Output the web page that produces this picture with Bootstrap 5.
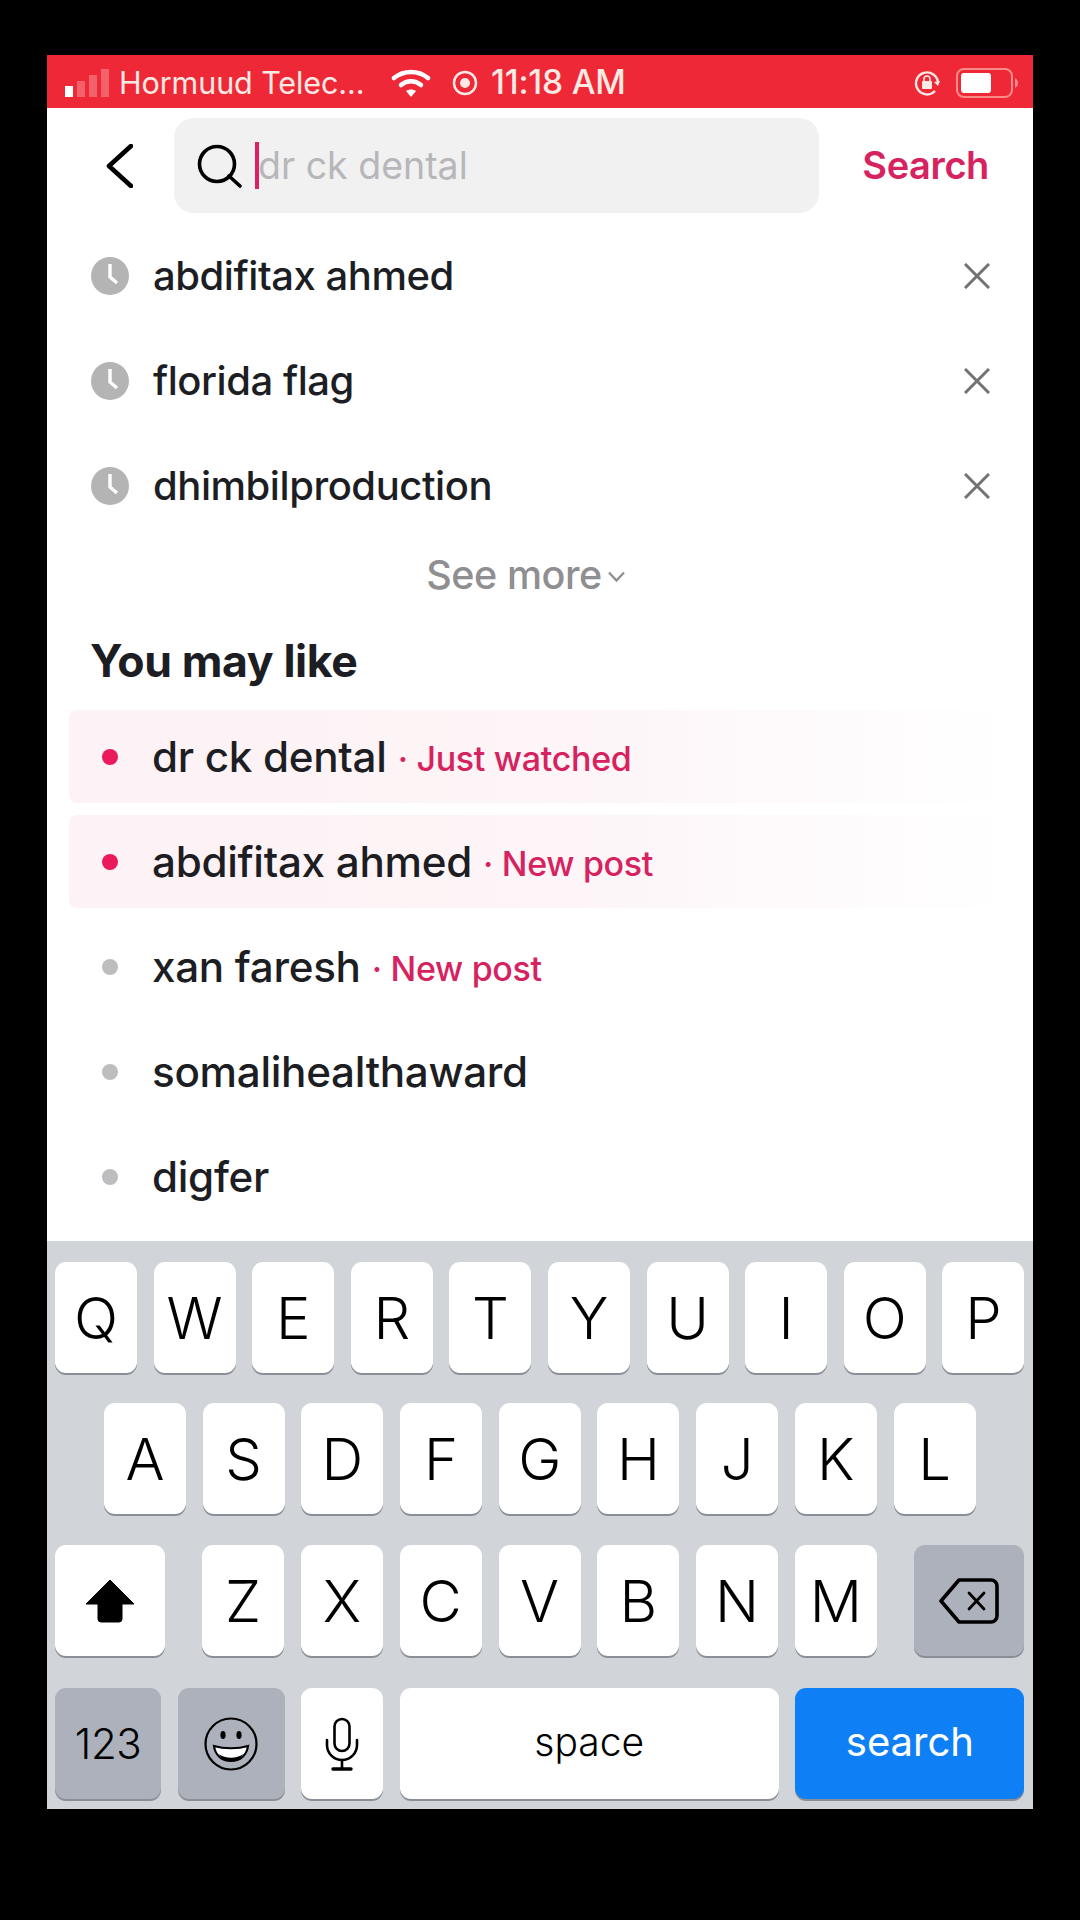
<!DOCTYPE html>
<html lang="en">
<head>
  <meta charset="UTF-8" />
  <meta name="viewport" content="width=device-width, initial-scale=1" />
  <title>Search</title>
  <link href="https://cdn.jsdelivr.net/npm/bootstrap@5.3.3/dist/css/bootstrap.min.css" rel="stylesheet">
  <style>
    html, body { background: #000; }
    body { margin: 0; height: 1920px; padding: 55px 47px 111px 47px; font-family: Inter, "Liberation Sans", sans-serif; color: #1d1e23; overflow: hidden; }
    .phone-screen { width: 986px; height: 1754px; background: #fff; }

    .status-strip { height: 53px; background: #ee2836; color: #fbe9e4; font-size: 30.5px; padding: 2px 15px 0 18px; }
    .signal-bars { width: 44px; height: 28px; gap: 4px; }
    .signal-bars i { width: 8px; background: #f3616a; display: block; }
    .signal-bars i:first-child { background: #fff; }
    .carrier-text { margin-left: 10px; width: 272px; letter-spacing: -.1px; }
    .alarm-mark { margin-left: 21px; }
    .clock-text { font-size: 33.5px; font-weight: 500; margin-left: 13px; letter-spacing: -.2px; }

    .search-head { height: 115.5px; padding: 10px 44px 10.5px 0; }
    .back-slot { width: 127px; padding-left: 59px; }
    .search-field { width: 645px; height: 95px; background: #f1f1f2; border-radius: 20px; padding-left: 22px; font-size: 37.5px; color: #b7b7ba; }
    .hint-text { padding-top: 2px; }
    .caret-bar { width: 4px; height: 47px; background: #de1f63; margin-left: 13px; margin-right: -1px; }
    .search-go { color: #d6225f; font-size: 38px; font-weight: 600; margin-left: auto; letter-spacing: -.4px; }

    .history-row { height: 105px; padding: 0 43px 0 44px; font-size: 40px; font-weight: 500; letter-spacing: -.45px; }
    .history-row svg:first-child { margin-right: 24px; }
    .see-more { height: 73px; color: #8f8f91; font-size: 39.5px; font-weight: 500; letter-spacing: -.45px; gap: 6px; padding-right: 29px; padding-top: 2px; }
    .may-like { height: 98.5px; padding-left: 43px; font-size: 44.6px; font-weight: 700; letter-spacing: -.4px; margin: 0; padding-top: 1px; color: #1d1e23; }

    .suggest-row { height: 93px; margin: 0 23px 12px 22px; padding-left: 33px; font-size: 42.2px; font-weight: 500; letter-spacing: -.3px; border-radius: 8px; }
    .suggest-hot { background: linear-gradient(90deg, #fdf2f5 0%, #fdf5f7 55%, #fff 100%); }
    .suggest-dot { width: 16px; height: 16px; border-radius: 50%; background: #bdbdbf; margin-right: 34px; flex: none; }
    .suggest-hot .suggest-dot { background: #ea1a5d; }
    .suggest-note { color: #d6225f; font-size: 34px; font-weight: 500; letter-spacing: -.3px; margin-left: 11px; margin-top: 4px; }

    .kb-panel { height: 568px; background: #d1d4d9; padding: 21px 9px 0 8px; margin-top: auto; }
    .kb-line { gap: 16.6px; height: 111px; margin-bottom: 30px; }
    .kb-line-second { padding-left: 49px; gap: 16.7px; margin-bottom: 31px; }
    .kb-line-third { margin-bottom: 32px; }
    .kb-key { flex: 0 0 82px; height: 111px; padding: 0; border: 0; border-radius: 11px; background-color: #fff; box-shadow: 0 2px 0 #8a8e96; color: #000; font-size: 58px; line-height: 1; font-weight: 350; font-family: Inter, "Liberation Sans", sans-serif; display: flex; align-items: center; justify-content: center; }
    .kb-dark { background-color: #acb1bb; }
    .kb-shift { flex-basis: 110px; }
    .kb-del { flex-basis: 110px; }
    .kb-num { flex-basis: 106px; font-size: 42px; letter-spacing: -.5px; font-weight: 300; }
    .kb-emoji { flex-basis: 107px; }
    .kb-space { flex-basis: 379px; font-size: 39px; padding-bottom: 4px; }
    .kb-search { flex-basis: 229px; background-color: #0f7ff5; color: #fff; font-size: 40px; font-weight: 400; padding-bottom: 4px; }
    .kb-letters { gap: 16.8px; }
  </style>
</head>
<body>
  <div class="phone-screen d-flex flex-column">
    <div class="status-strip d-flex align-items-center">
      <div class="signal-bars d-flex align-items-end">
        <i style="height:11px"></i><i style="height:16px"></i><i style="height:22px"></i><i style="height:28px"></i>
      </div>
      <span class="carrier-text">Hormuud Telec...</span>
      <svg width="40" height="30" viewBox="0 0 40 30" fill="none" stroke="#fff" stroke-width="4.5" stroke-linecap="round">
        <path d="M3 10c10-8 24-8 34 0"/><path d="M10 17c6-5 14-5 20 0"/><path d="M20 29l-5-6c3-2 7-2 10 0z" fill="#fff" stroke="none"/>
      </svg>
      <svg class="alarm-mark" width="26" height="26" viewBox="0 0 26 26">
        <circle cx="13" cy="13" r="11" fill="none" stroke="#fbe9e4" stroke-width="2.5"/><circle cx="13" cy="13" r="5" fill="#fbe9e4"/>
      </svg>
      <span class="clock-text">11:18 AM</span>
      <svg class="ms-auto" width="26" height="26" viewBox="0 0 26 26" fill="none">
        <path d="M21 21a11 11 0 1 1 3-8" stroke="#fbe9e4" stroke-width="2.4"/><path d="M20 12l4 4 2-5z" fill="#fbe9e4"/><rect x="8" y="11" width="10" height="8" rx="1" fill="#fbe9e4"/><path d="M10 11V9a3 3 0 0 1 6 0v2" stroke="#fbe9e4" stroke-width="1.6"/>
      </svg>
      <svg class="ms-3" width="62" height="30" viewBox="0 0 62 30">
        <rect x="1" y="1" width="55" height="28" rx="7" fill="none" stroke="#f88a8a" stroke-width="2"/><rect x="5" y="5" width="30" height="20" rx="3" fill="#fff"/><path d="M59 10c2 1 3 3 3 5s-1 4-3 5z" fill="#f88a8a"/>
      </svg>
    </div>

    <div class="search-head d-flex align-items-center">
      <div class="back-slot">
        <svg width="27" height="44" viewBox="0 0 27 44" fill="none" stroke="#000" stroke-width="4.6" stroke-linecap="round" stroke-linejoin="round"><path d="M25 2L3 22l22 20"/></svg>
      </div>
      <div class="search-field d-flex align-items-center">
        <svg width="46" height="44" viewBox="0 0 46 44" fill="none" stroke="#000" stroke-width="3.6" stroke-linecap="round"><circle cx="21" cy="20" r="17.5"/><path d="M33 32l11 10"/></svg>
        <span class="caret-bar"></span>
        <span class="hint-text">dr ck dental</span>
      </div>
      <span class="search-go">Search</span>
    </div>

    <div class="history-row d-flex align-items-center">
      <svg width="38" height="38" viewBox="0 0 38 38"><circle cx="19" cy="19" r="19" fill="#b4b4b5"/><path d="M19 7v13l7 6" fill="none" stroke="#fff" stroke-width="3.4"/></svg>
      <span>abdifitax ahmed</span>
      <svg class="ms-auto" width="26" height="26" viewBox="0 0 26 26" fill="none" stroke="#737375" stroke-width="3"><path d="M1 1l24 24M25 1L1 25"/></svg>
    </div>
    <div class="history-row d-flex align-items-center">
      <svg width="38" height="38" viewBox="0 0 38 38"><circle cx="19" cy="19" r="19" fill="#b4b4b5"/><path d="M19 7v13l7 6" fill="none" stroke="#fff" stroke-width="3.4"/></svg>
      <span>florida flag</span>
      <svg class="ms-auto" width="26" height="26" viewBox="0 0 26 26" fill="none" stroke="#737375" stroke-width="3"><path d="M1 1l24 24M25 1L1 25"/></svg>
    </div>
    <div class="history-row d-flex align-items-center">
      <svg width="38" height="38" viewBox="0 0 38 38"><circle cx="19" cy="19" r="19" fill="#b4b4b5"/><path d="M19 7v13l7 6" fill="none" stroke="#fff" stroke-width="3.4"/></svg>
      <span>dhimbilproduction</span>
      <svg class="ms-auto" width="26" height="26" viewBox="0 0 26 26" fill="none" stroke="#737375" stroke-width="3"><path d="M1 1l24 24M25 1L1 25"/></svg>
    </div>

    <div class="see-more d-flex align-items-center justify-content-center">
      <span>See more</span>
      <svg width="17" height="11" viewBox="0 0 17 11" fill="none" stroke="#8f8f91" stroke-width="2.4"><path d="M1 1.5l7.5 8 7.5-8"/></svg>
    </div>

    <h2 class="may-like d-flex align-items-center">You may like</h2>

    <div class="suggest-row suggest-hot d-flex align-items-center">
      <span class="suggest-dot"></span><span>dr ck dental</span><span class="suggest-note">· Just watched</span>
    </div>
    <div class="suggest-row suggest-hot d-flex align-items-center">
      <span class="suggest-dot"></span><span>abdifitax ahmed</span><span class="suggest-note">· New post</span>
    </div>
    <div class="suggest-row d-flex align-items-center">
      <span class="suggest-dot"></span><span>xan faresh</span><span class="suggest-note">· New post</span>
    </div>
    <div class="suggest-row d-flex align-items-center">
      <span class="suggest-dot"></span><span>somalihealthaward</span>
    </div>
    <div class="suggest-row d-flex align-items-center">
      <span class="suggest-dot"></span><span>digfer</span>
    </div>

    <div class="kb-panel">
      <div class="kb-line d-flex">
        <button class="btn kb-key">Q</button><button class="btn kb-key">W</button><button class="btn kb-key">E</button><button class="btn kb-key">R</button><button class="btn kb-key">T</button><button class="btn kb-key">Y</button><button class="btn kb-key">U</button><button class="btn kb-key">I</button><button class="btn kb-key">O</button><button class="btn kb-key">P</button>
      </div>
      <div class="kb-line kb-line-second d-flex">
        <button class="btn kb-key">A</button><button class="btn kb-key">S</button><button class="btn kb-key">D</button><button class="btn kb-key">F</button><button class="btn kb-key">G</button><button class="btn kb-key">H</button><button class="btn kb-key">J</button><button class="btn kb-key">K</button><button class="btn kb-key">L</button>
      </div>
      <div class="kb-line kb-line-third d-flex justify-content-between">
        <button class="btn kb-key kb-shift" aria-label="shift">
          <svg width="50" height="44" viewBox="0 0 50 44"><path d="M25 1L49 25H37v15a3 3 0 0 1-3 3H16a3 3 0 0 1-3-3V25H1z" fill="#000" stroke="#000" stroke-linejoin="round" stroke-width="1"/></svg>
        </button>
        <div class="kb-letters d-flex">
          <button class="btn kb-key">Z</button><button class="btn kb-key">X</button><button class="btn kb-key">C</button><button class="btn kb-key">V</button><button class="btn kb-key">B</button><button class="btn kb-key">N</button><button class="btn kb-key">M</button>
        </div>
        <button class="btn kb-key kb-del kb-dark" aria-label="delete">
          <svg width="60" height="46" viewBox="0 0 60 46" fill="none" stroke="#000" stroke-width="3.6" stroke-linejoin="round" stroke-linecap="round"><path d="M20 2h32a6 6 0 0 1 6 6v30a6 6 0 0 1-6 6H20L2 23z"/><path d="M30 15l15 16M45 15L30 31" stroke-width="2.8"/></svg>
        </button>
      </div>
      <div class="kb-line d-flex">
        <button class="btn kb-key kb-num kb-dark">123</button>
        <button class="btn kb-key kb-emoji kb-dark" aria-label="emoji">
          <svg width="54" height="54" viewBox="0 0 54 54" fill="none" stroke="#000" stroke-width="2.2"><circle cx="27" cy="27" r="25.5"/><ellipse cx="19" cy="18" rx="2.6" ry="4" fill="#000" stroke="none"/><ellipse cx="35" cy="18" rx="2.6" ry="4" fill="#000" stroke="none"/><path d="M10 29c10 3 24 3 34 0-1 9-8 15-17 15s-16-6-17-15z" fill="#fff"/><path d="M15 37c6 5 18 5 24 0-3 5-7 7-12 7s-9-2-12-7z" fill="#000" stroke="none"/></svg>
        </button>
        <button class="btn kb-key" aria-label="dictation">
          <svg width="34" height="54" viewBox="0 0 34 54" fill="none" stroke="#000" stroke-width="2.6" stroke-linecap="round"><rect x="9.5" y="2" width="15" height="32" rx="7.5"/><path d="M2 23v5a15 15 0 0 0 30 0v-5"/><path d="M17 43v8"/><path d="M8 52h18" stroke-width="3.4"/></svg>
        </button>
        <button class="btn kb-key kb-space">space</button>
        <button class="btn kb-key kb-search">search</button>
      </div>
    </div>
  </div>
  <script src="https://cdn.jsdelivr.net/npm/bootstrap@5.3.3/dist/js/bootstrap.bundle.min.js"></script>
</body>
</html>
